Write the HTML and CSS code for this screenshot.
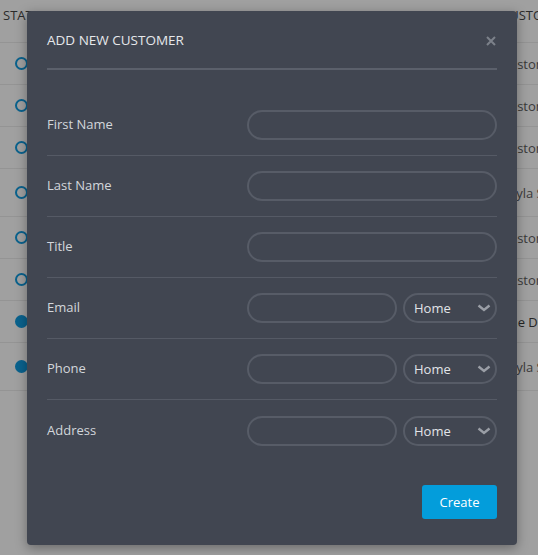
FILE: index.html
```html
<!DOCTYPE html>
<html>
<head>
<meta charset="utf-8">
<link rel="stylesheet" href="styles.css">
</head>
<body>
<div class="table">
  <div class="thead">
    <div class="c-status">STATUS</div>
    <div class="c-name">CUSTOMER</div>
  </div>
  <div class="tr"><div class="c-status"><span class="dot"></span></div><div class="c-name">Customer</div></div>
  <div class="tr"><div class="c-status"><span class="dot"></span></div><div class="c-name">Customer</div></div>
  <div class="tr"><div class="c-status"><span class="dot"></span></div><div class="c-name">Customer</div></div>
  <div class="tr tall"><div class="c-status"><span class="dot"></span></div><div class="c-name">Kayla Smith</div></div>
  <div class="tr"><div class="c-status"><span class="dot"></span></div><div class="c-name">Customer</div></div>
  <div class="tr"><div class="c-status"><span class="dot"></span></div><div class="c-name">Customer</div></div>
  <div class="tr"><div class="c-status"><span class="dot full"></span></div><div class="c-name dark">Jane Doe</div></div>
  <div class="tr tall"><div class="c-status"><span class="dot full"></span></div><div class="c-name">Kayla Smith</div></div>
</div>

<div class="modal">
  <div class="m-head">
    <h2 class="m-title">Add New Customer</h2>
    <svg class="m-close" width="10" height="10" viewBox="0 0 10 10"><path d="M1 1 L9 9 M9 1 L1 9" stroke="#7c818a" stroke-width="2" fill="none"/></svg>
  </div>
  <div class="m-body">
    <div class="f-row">
      <label class="f-label">First Name</label>
      <div class="f-ctrl"><div class="inp"></div></div>
    </div>
    <div class="f-row">
      <label class="f-label">Last Name</label>
      <div class="f-ctrl"><div class="inp"></div></div>
    </div>
    <div class="f-row">
      <label class="f-label">Title</label>
      <div class="f-ctrl"><div class="inp"></div></div>
    </div>
    <div class="f-row">
      <label class="f-label">Email</label>
      <div class="f-ctrl"><div class="inp short"></div><div class="sel">Home<svg class="chev" width="14" height="8" viewBox="0 0 14 8"><path d="M1.5 1.5 L7 6 L12.5 1.5" fill="none" stroke="#9a9ea6" stroke-width="2.4"/></svg></div></div>
    </div>
    <div class="f-row">
      <label class="f-label">Phone</label>
      <div class="f-ctrl"><div class="inp short"></div><div class="sel">Home<svg class="chev" width="14" height="8" viewBox="0 0 14 8"><path d="M1.5 1.5 L7 6 L12.5 1.5" fill="none" stroke="#9a9ea6" stroke-width="2.4"/></svg></div></div>
    </div>
    <div class="f-row last">
      <label class="f-label">Address</label>
      <div class="f-ctrl"><div class="inp short"></div><div class="sel">Home<svg class="chev" width="14" height="8" viewBox="0 0 14 8"><path d="M1.5 1.5 L7 6 L12.5 1.5" fill="none" stroke="#9a9ea6" stroke-width="2.4"/></svg></div></div>
    </div>
  </div>
  <div class="m-foot">
    <button class="btn">Create</button>
  </div>
</div>
</body>
</html>
```
FILE: styles.css
```css
html, body {
  margin: 0;
  padding: 0;
}
body {
  width: 538px;
  height: 555px;
  background: #a0a0a0;
  font-family: "Open Sans", "Liberation Sans", sans-serif;
  overflow: hidden;
  position: relative;
}
.table {
  width: 538px;
}
.thead, .tr {
  display: flex;
  border-bottom: 1px solid #949494;
  box-sizing: border-box;
}
.thead {
  height: 43px;
  align-items: flex-start;
  padding-top: 6px;
  font-size: 13px;
  color: #2b2b2b;
}
.thead .c-status {
  padding-left: 3px;
}
.tr {
  height: 42px;
  align-items: center;
  font-size: 13px;
  color: #3a3a3a;
}
.tr.tall {
  height: 48px;
}
.c-status {
  width: 501px;
  flex: none;
  box-sizing: border-box;
}
.tr .c-status {
  padding-left: 15px;
  display: flex;
  align-items: center;
}
.c-name {
  white-space: nowrap;
}
.c-name.dark {
  color: #262626;
  margin-left: -2px;
}
.dot {
  display: block;
  width: 13px;
  height: 13px;
  border: 2px solid #0a628d;
  border-radius: 50%;
  box-sizing: border-box;
}
.dot.full {
  background: #0a628d;
}

.modal {
  position: absolute;
  left: 27px;
  top: 11px;
  width: 490px;
  height: 534px;
  background: #414651;
  border-radius: 4px;
  box-shadow: 0 3px 12px rgba(0, 0, 0, 0.35);
  padding: 0 20px;
  box-sizing: border-box;
  display: flex;
  flex-direction: column;
}
.m-head {
  height: 59px;
  display: flex;
  align-items: center;
  justify-content: space-between;
  border-bottom: 2px solid #5b606b;
  box-sizing: border-box;
}
.m-title {
  margin: 0;
  font-size: 13.5px;
  font-weight: 400;
  text-transform: uppercase;
  color: #e6e8eb;
}
.m-close {
  display: block;
  margin-right: 1px;
  margin-top: 2px;
}
.m-body {
  padding-top: 25px;
}
.f-row {
  height: 61px;
  display: flex;
  align-items: center;
  border-bottom: 1px solid #555a65;
  box-sizing: border-box;
}
.f-row.last {
  border-bottom: none;
}
.f-label {
  width: 200px;
  flex: none;
  font-size: 13px;
  color: #d3d6db;
  margin-top: -2px;
}
.f-ctrl {
  flex: 1;
  display: flex;
  gap: 6px;
}
.inp {
  flex: 1;
  height: 30px;
  border: 2px solid #575c67;
  border-radius: 15px;
  box-sizing: border-box;
}
.inp.short {
  flex: none;
  width: 150px;
}
.sel {
  flex: 1;
  height: 30px;
  border: 2px solid #575c67;
  border-radius: 15px;
  box-sizing: border-box;
  display: flex;
  align-items: center;
  justify-content: space-between;
  padding: 0 4px 0 9px;
  font-size: 13px;
  color: #e2e4e8;
}
.chev {
  display: block;
}
.m-foot {
  margin-top: auto;
  padding-bottom: 26px;
  display: flex;
  justify-content: flex-end;
}
.btn {
  width: 75px;
  height: 34px;
  border: none;
  border-radius: 3px;
  background: #039ddb;
  color: #ffffff;
  font-family: "Open Sans", "Liberation Sans", sans-serif;
  font-size: 13px;
  padding: 0;
}
```
